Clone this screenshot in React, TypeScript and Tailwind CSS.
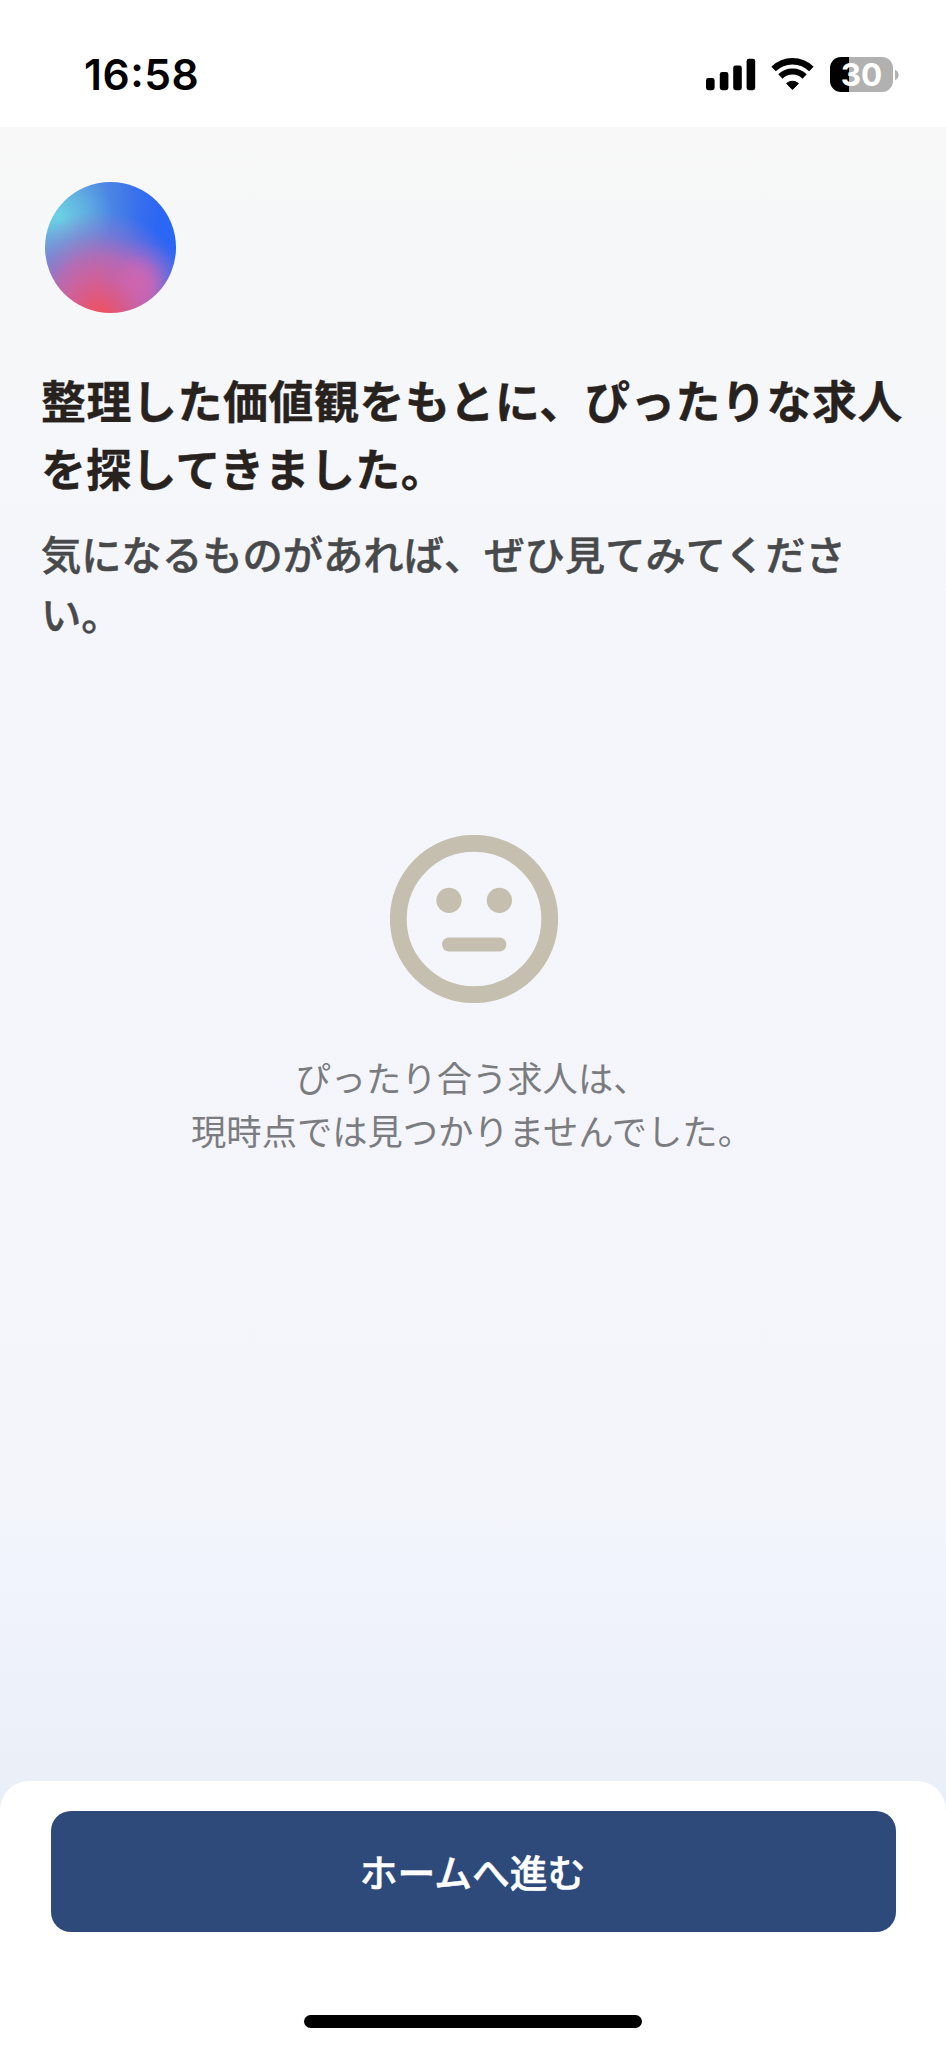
function StatusBar() {
  return (
    <header className="flex h-[127px] shrink-0 items-start justify-between bg-white pr-[47px] pl-[84px]">
      <div className="flex pt-[50px] font-['Inter',sans-serif] text-[42.5px] leading-[50px] font-semibold tracking-[0.5px] text-black">
        <span>16</span>
        <span className="-mt-[3px]">:</span>
        <span>58</span>
      </div>
      <div className="flex items-start pt-[57px]">
        <svg width="50" height="35" viewBox="0 0 50 35" className="mr-[15px]" fill="#000">
          <rect x="0" y="21" width="8.6" height="12.2" rx="2.4" />
          <rect x="13.8" y="15" width="8.6" height="18.2" rx="2.4" />
          <rect x="27.2" y="8.6" width="8.6" height="24.6" rx="2.4" />
          <rect x="40.6" y="1.8" width="8.6" height="31.4" rx="2.4" />
        </svg>
        <svg width="43" height="35" viewBox="0 0 43 35" className="mr-[16px]" fill="none" stroke="#000">
          <path d="M2.6 12 A27 27 0 0 1 40.4 12" strokeWidth="6.4" />
          <path d="M9.4 19.4 A17.4 17.4 0 0 1 33.6 19.4" strokeWidth="6.2" />
          <path d="M15.6 26.4 A9.2 9.2 0 0 1 27.4 26.4 L22.4 31.8 Q21.5 32.8 20.6 31.8 Z" fill="#000" strokeWidth="1" />
        </svg>
        <div className="flex items-center">
          <div className="flex h-[35px] w-[63px] items-center justify-center rounded-[11px] bg-[linear-gradient(90deg,#000_19px,#b1b1b1_19px)] font-['Inter',sans-serif] text-[31.5px] leading-none font-bold text-white">
            30
          </div>
          <svg width="5" height="12" viewBox="0 0 5 12" className="ml-[1px]">
            <path d="M1 0.8 Q4.6 2.4 4.6 6 T1 11.2 Z" fill="#b1b1b1" />
          </svg>
        </div>
      </div>
    </header>
  );
}

function Orb() {
  return (
    <div className="ml-[4px] size-[131px] rounded-full bg-[radial-gradient(circle_at_42%_102%,#f0505c_0%,rgba(230,84,112,0.6)_14%,rgba(216,94,146,0.3)_26%,rgba(208,98,170,0)_42%),radial-gradient(circle_at_72%_76%,rgba(207,102,182,0.9)_0%,rgba(205,102,184,0.7)_10%,rgba(180,104,196,0.3)_20%,rgba(150,104,210,0)_30%),radial-gradient(ellipse_70%_74%_at_42%_96%,#d46098_0%,rgba(208,98,158,0.92)_34%,rgba(188,106,178,0.85)_54%,rgba(150,114,200,0.5)_76%,rgba(120,116,212,0)_100%),radial-gradient(circle_at_10%_26%,#6cd2e4_0%,rgba(98,184,226,0.85)_18%,rgba(80,150,228,0.35)_36%,rgba(70,130,228,0)_52%),linear-gradient(100deg,#7490d8_0%,#4a7ee2_40%,#2c66f4_78%)]" />
  );
}

function NeutralFace() {
  return (
    <svg width="168" height="168" viewBox="0 0 168 168" fill="#c4bfae">
      <circle cx="84" cy="84" r="75.7" fill="none" stroke="#c4bfae" strokeWidth="16.8" />
      <circle cx="59" cy="65.4" r="12.6" />
      <circle cx="109.4" cy="65.4" r="12.6" />
      <rect x="52" y="102.6" width="64.4" height="13.8" rx="6.9" />
    </svg>
  );
}

export default function App() {
  return (
    <div
      lang="ja"
      className="flex h-[2048px] w-[946px] flex-col overflow-hidden bg-white font-['Noto_Sans_CJK_JP',sans-serif]"
    >
      <StatusBar />
      <div className="flex min-h-0 flex-1 flex-col bg-[linear-gradient(180deg,#f8f8f8_0px,#f5f7f9_230px,#f4f6fb_500px,#f3f5fb_1390px,#f1f4fd_1440px,#eaeff8_1650px,#e8eff9_1690px)]">
        <main className="flex flex-1 flex-col px-[41px] pt-[55px]">
          <Orb />
          <h1 className="mt-[53px] text-[44.9px] leading-[68px] font-bold whitespace-nowrap text-[#28221f] [-webkit-text-stroke:0.4px_#28221f]">
            <span className="block tracking-[0.6px]">整理した価値観をもとに、ぴったりな求人</span>
            <span className="block tracking-[0.4px]">を探してきました。</span>
          </h1>
          <p className="mt-[21px] text-[40.3px] leading-[59.5px] font-medium whitespace-nowrap text-[#48494b] [-webkit-text-stroke:0.5px_#48494b]">
            気になるものがあれば、ぜひ見てみてくださ
            <br />
            い。
          </p>
          <section className="mt-[193px] flex flex-col items-center pl-px">
            <NeutralFace />
            <p className="mt-[47px] -ml-[3px] text-center text-[35.3px] leading-[53px] whitespace-nowrap text-[#7b7c7f]">
              ぴったり合う求人は、
              <br />
              現時点では見つかりませんでした。
            </p>
          </section>
        </main>
        <footer className="flex h-[267px] shrink-0 flex-col items-center rounded-t-[29px] bg-white pt-[30px]">
          <button className="h-[121px] w-[845px] rounded-[20px] bg-[#2e4a7a] pr-[1px] pb-[2px] text-[37.8px] leading-none font-medium text-white [-webkit-text-stroke:0.5px_#fff]">
            ホームへ進む
          </button>
          <div className="mt-[83px] h-[13px] w-[338px] rounded-full bg-black" />
        </footer>
      </div>
    </div>
  );
}
